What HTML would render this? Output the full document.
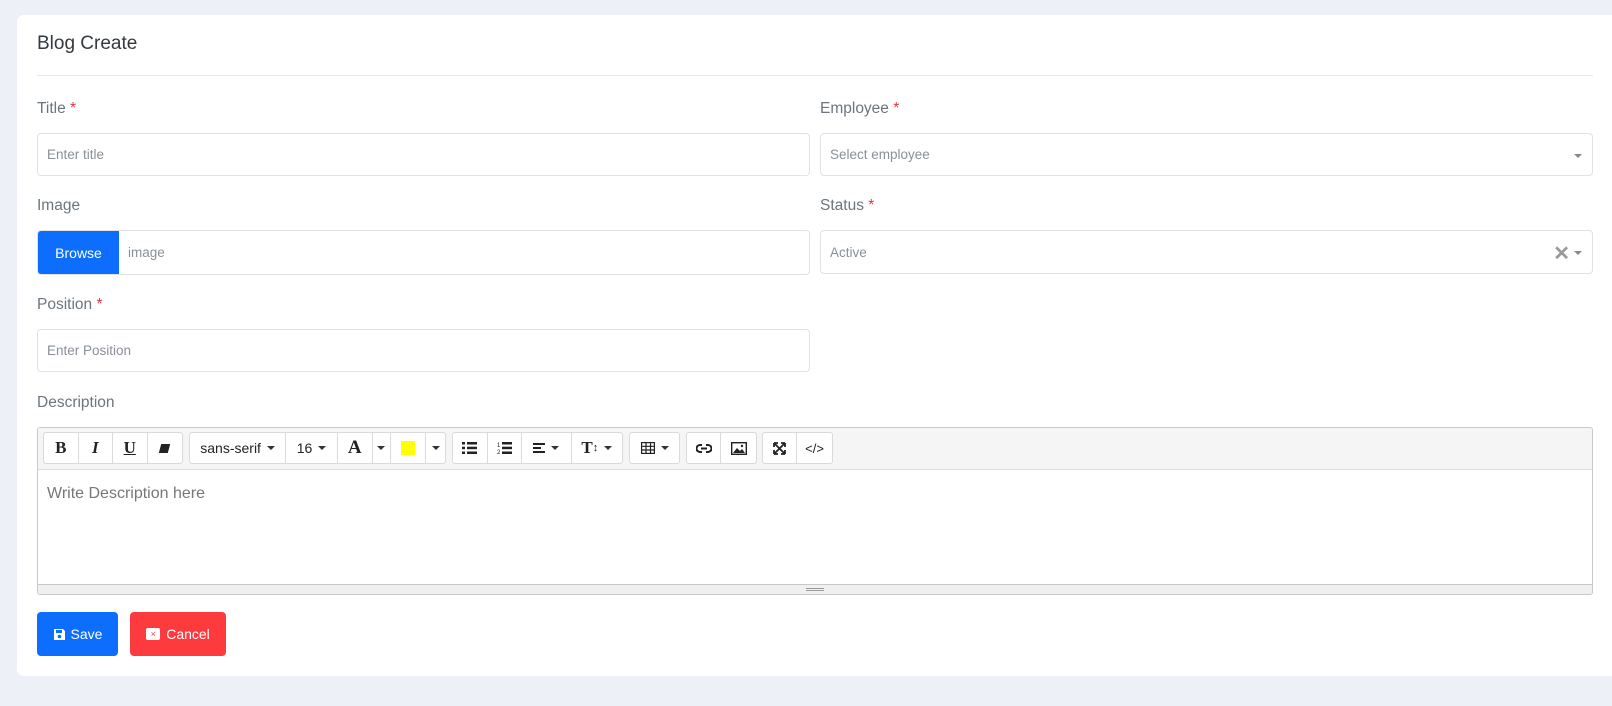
<!DOCTYPE html>
<html><head><meta charset="utf-8"><style>
*{box-sizing:border-box;margin:0;padding:0}
body{width:1612px;height:706px;background:#edf1f7;font-family:"Liberation Sans",Arial,sans-serif;position:relative;overflow:hidden}
.card{position:absolute;left:17px;top:15px;width:1610px;height:661px;background:#fff;border-radius:7px}
.a{position:absolute}
.h{left:37px;top:33px;font-size:19px;color:#343a40}
.hr{left:37px;top:75px;width:1556px;height:1px;background:#e3e6ea}
.lbl{font-size:15.5px;color:#6c757d}
.lbl b{color:#dc3545;font-weight:normal}
.inp{border:1px solid #dfe2e6;border-radius:4px;background:#fff;font-size:13.5px;color:#8a9097;padding-left:9px;display:flex;align-items:center}
.tb{top:432px;height:32px;border:1px solid #dadada;border-radius:3px;background:#fff;display:flex}
.tb span{border-right:1px solid #dadada;display:flex;align-items:center;justify-content:center;font-size:14px;color:#222;height:100%}
.tb span:last-child{border-right:none}
.car{display:inline-block;width:0;height:0;border-left:4px solid transparent;border-right:4px solid transparent;border-top:4px solid #333;margin-left:6px}
.btn{color:#fff;font-size:14px;border-radius:4px;display:flex;align-items:center;justify-content:center}
</style></head><body>
<div class="card"></div>
<div class="a h">Blog Create</div>
<div class="a hr"></div>

<div class="a lbl" style="left:37px;top:100px">Title <b>*</b></div>
<div class="a inp" style="left:37px;top:133px;width:773px;height:43px">Enter title</div>
<div class="a lbl" style="left:820px;top:100px">Employee <b>*</b></div>
<div class="a inp" style="left:820px;top:133px;width:773px;height:43px">Select employee<span class="car" style="position:absolute;right:10px;top:20px;border-top-color:#888"></span></div>

<div class="a lbl" style="left:37px;top:197px">Image</div>
<div class="a inp" style="left:37px;top:230px;width:773px;height:45px;padding-left:0"><div class="btn" style="background:#0d6efd;width:81px;height:100%;border-radius:3px 0 0 3px">Browse</div><span style="margin-left:9px">image</span></div>
<div class="a lbl" style="left:820px;top:197px">Status <b>*</b></div>
<div class="a inp" style="left:820px;top:230px;width:773px;height:44px">Active<span style="position:absolute;right:22px;top:10px;font-size:20px;font-weight:bold;color:#999">✕</span><span class="car" style="position:absolute;right:10px;top:20px;border-top-color:#888"></span></div>

<div class="a lbl" style="left:37px;top:296px">Position <b>*</b></div>
<div class="a inp" style="left:37px;top:329px;width:773px;height:43px">Enter Position</div>

<div class="a lbl" style="left:37px;top:394px">Description</div>
<div class="a" style="left:37px;top:427px;width:1556px;height:168px;border:1px solid #c9c9c9;border-radius:3px;background:#fff;overflow:hidden">
 <div style="height:42px;background:#f5f5f5;border-bottom:1px solid #ddd"></div>
 <div style="padding:15px 9px;font-size:16px;color:#777">Write Description here</div>
 <div style="position:absolute;left:0;right:0;bottom:0;height:10px;background:#f0f0f0;border-top:1px solid #c9c9c9"><div style="width:18px;margin:3px auto;border-top:1px solid #999;border-bottom:1px solid #999;height:3px"></div></div>
</div>
<div class="a tb" style="left:43px;width:140px"><span style="width:35px;font-family:'Liberation Serif';font-weight:bold;font-size:17px">B</span><span style="width:35px;font-family:'Liberation Serif';font-style:italic;font-weight:bold;font-size:17px">I</span><span style="width:35px;font-family:'Liberation Serif';text-decoration:underline;font-weight:bold;font-size:17px">U</span><span style="width:35px"><i style="display:block;width:9px;height:9px;background:#222;transform:skewX(-15deg)"></i></span></div>
<div class="a tb" style="left:189px;width:257px"><span style="width:97px">sans-serif<i class="car"></i></span><span style="width:52px">16<i class="car"></i></span><span style="width:35px;font-family:'Liberation Serif';font-weight:bold;font-size:19px">A</span><span style="width:19px"><i class="car" style="margin:0"></i></span><span style="width:35px"><i style="width:14px;height:14px;background:#ff0;display:block"></i></span><span style="width:19px"><i class="car" style="margin:0"></i></span></div>
<div class="a tb" style="left:452px;width:171px">
<span style="width:35px"><svg width="15" height="12"><g fill="#222"><rect x="0" y="0" width="3" height="2.5"/><rect x="5" y="0" width="10" height="2.5"/><rect x="0" y="4.7" width="3" height="2.5"/><rect x="5" y="4.7" width="10" height="2.5"/><rect x="0" y="9.5" width="3" height="2.5"/><rect x="5" y="9.5" width="10" height="2.5"/></g></svg></span>
<span style="width:35px"><svg width="15" height="12"><g fill="#222"><rect x="5" y="0" width="10" height="2.5"/><rect x="5" y="4.7" width="10" height="2.5"/><rect x="5" y="9.5" width="10" height="2.5"/></g><text x="0" y="12" font-size="6" fill="#222">2</text><text x="0" y="5" font-size="6" fill="#222">1</text></svg></span>
<span style="width:50px"><svg width="12" height="10"><g fill="#222"><rect y="0" width="12" height="2"/><rect y="4" width="8" height="2"/><rect y="8" width="12" height="2"/></g></svg><i class="car"></i></span>
<span style="width:51px;font-family:'Liberation Serif';font-weight:bold;font-size:17px">T<small style="font-size:11px">↕</small><i class="car"></i></span></div>
<div class="a tb" style="left:629px;width:51px"><span style="width:51px"><svg width="14" height="12"><g fill="none" stroke="#222" stroke-width="1.2"><rect x=".6" y=".6" width="12.8" height="10.8"/><path d="M5 0v12M9.5 0v12M0 4.3h14M0 8h14"/></g></svg><i class="car"></i></span></div>
<div class="a tb" style="left:686px;width:71px"><span style="width:35px"><svg width="16" height="9"><path d="M6 1H4a3.5 3.5 0 000 7h2M10 1h2a3.5 3.5 0 010 7h-2M5 4.5h6" fill="none" stroke="#222" stroke-width="2"/></svg></span><span style="width:36px"><svg width="16" height="13"><rect x=".7" y=".7" width="14.6" height="11.6" fill="none" stroke="#222" stroke-width="1.4"/><path d="M2 11l4-5 3 3 2-2 3 4z" fill="#222"/><circle cx="11" cy="4" r="1.2" fill="#222"/></svg></span></div>
<div class="a tb" style="left:762px;width:71px"><span style="width:35px"><svg width="13" height="13"><path d="M1 1l11 11M12 1L1 12M1 1h4M1 1v4M12 1h-4M12 1v4M1 12h4M1 12v-4M12 12h-4M12 12v-4" stroke="#222" stroke-width="1.8" fill="none"/></svg></span><span style="width:36px;font-size:13px">&lt;/&gt;</span></div>

<div class="a btn" style="left:37px;top:612px;width:81px;height:44px;background:#0d6efd"><svg width="13" height="13" style="margin-right:5px"><path d="M1 1h9l2 2v9H1z" fill="#fff"/><rect x="3" y="2" width="6" height="3" fill="#0d6efd"/><circle cx="6.5" cy="8.5" r="1.8" fill="#0d6efd"/></svg>Save</div>
<div class="a btn" style="left:130px;top:612px;width:96px;height:44px;background:#fd3b3f"><i style="display:inline-block;width:14px;height:12px;background:#fff;border-radius:2px;color:#fd3b3f;font-size:9px;line-height:12px;text-align:center;font-style:normal;margin-right:6px">×</i>Cancel</div>
</body></html>
